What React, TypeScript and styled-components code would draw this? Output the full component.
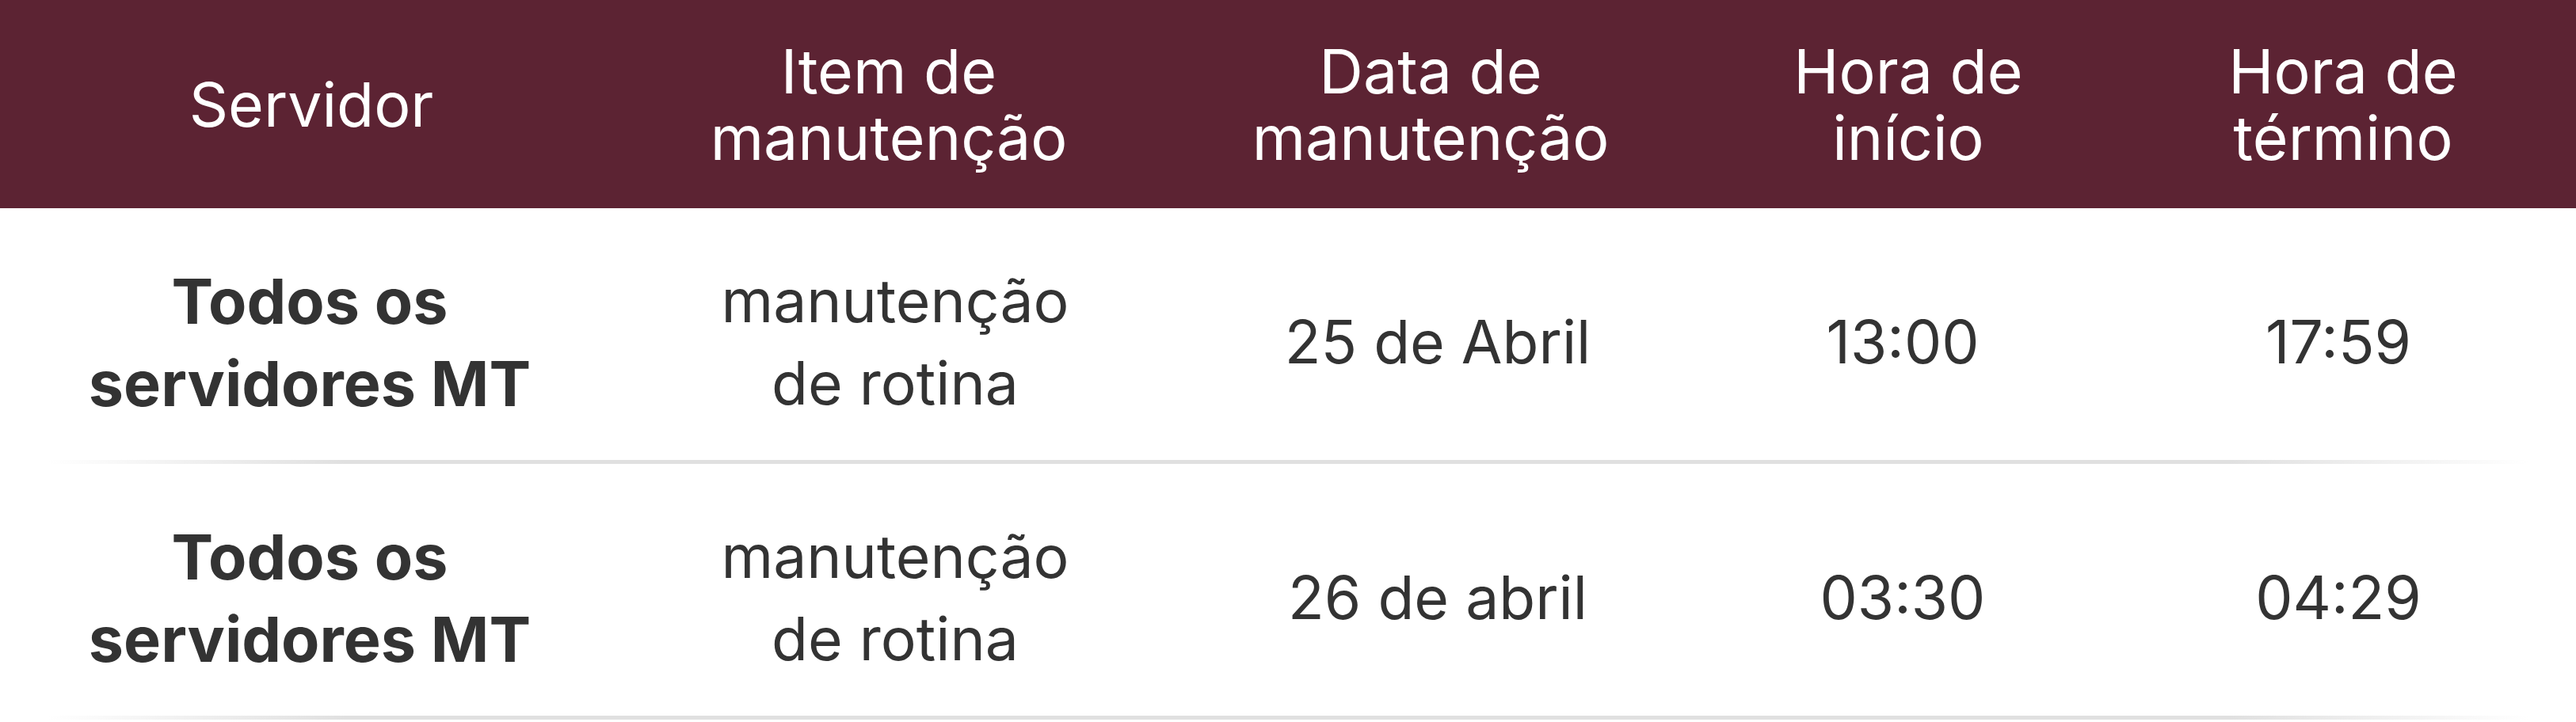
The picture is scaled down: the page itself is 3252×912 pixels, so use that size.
import styled, { createGlobalStyle } from "styled-components";

const GlobalStyle = createGlobalStyle`
  * { box-sizing: border-box; }
  body {
    margin: 0;
    background: #fff;
    font-family: "Inter", "Noto Sans", sans-serif;
  }
`;

const HEAD_COLUMNS = "786px 672px 696px 510px 1fr";
const BODY_COLUMNS = "782px 696px 674px 500px 1fr";

const Table = styled.div`
  width: 3252px;
  display: flex;
  flex-direction: column;
`;

const HeadRow = styled.div`
  display: grid;
  grid-template-columns: ${HEAD_COLUMNS};
  height: 263px;
  background: #5c2333;
  align-items: center;
`;

const HeadCell = styled.div`
  color: #fff;
  font-size: 77px;
  font-weight: 400;
  line-height: 84px;
  text-align: center;
`;

const BodyRow = styled.div`
  display: grid;
  grid-template-columns: ${BODY_COLUMNS};
  align-items: center;
  height: 318px;
  padding-top: 20px;
`;

const Cell = styled.div<{ $bold?: boolean }>`
  color: #333;
  font-size: ${(p) => (p.$bold ? 79 : 75)}px;
  font-weight: ${(p) => (p.$bold ? 700 : 400)};
  line-height: 104px;
  text-align: center;
`;

const Divider = styled.div`
  height: 5px;
  margin: 0 60px;
  background: linear-gradient(
    to right,
    rgba(224, 224, 224, 0) 0%,
    #e0e0e0 12%,
    #e0e0e0 88%,
    rgba(224, 224, 224, 0) 100%
  );
`;

const headers = [
  ["Servidor"],
  ["Item de", "manutenção"],
  ["Data de", "manutenção"],
  ["Hora de", "início"],
  ["Hora de", "término"],
];

const rows = [
  { date: "25 de Abril", start: "13:00", end: "17:59" },
  { date: "26 de abril", start: "03:30", end: "04:29" },
];

const Lines = ({ lines }: { lines: string[] }) => (
  <>
    {lines.map((l, i) => (
      <span key={i}>
        {i > 0 && <br />}
        {l}
      </span>
    ))}
  </>
);

export default function App() {
  return (
    <>
      <GlobalStyle />
      <Table>
        <HeadRow>
          {headers.map((h, i) => (
            <HeadCell key={i}>
              <Lines lines={h} />
            </HeadCell>
          ))}
        </HeadRow>
        {rows.map((r, i) => (
          <div key={i}>
            <BodyRow>
              <Cell $bold>
                <Lines lines={["Todos os", "servidores MT"]} />
              </Cell>
              <Cell>
                <Lines lines={["manutenção", "de rotina"]} />
              </Cell>
              <Cell>{r.date}</Cell>
              <Cell>{r.start}</Cell>
              <Cell>{r.end}</Cell>
            </BodyRow>
            <Divider />
          </div>
        ))}
      </Table>
    </>
  );
}
